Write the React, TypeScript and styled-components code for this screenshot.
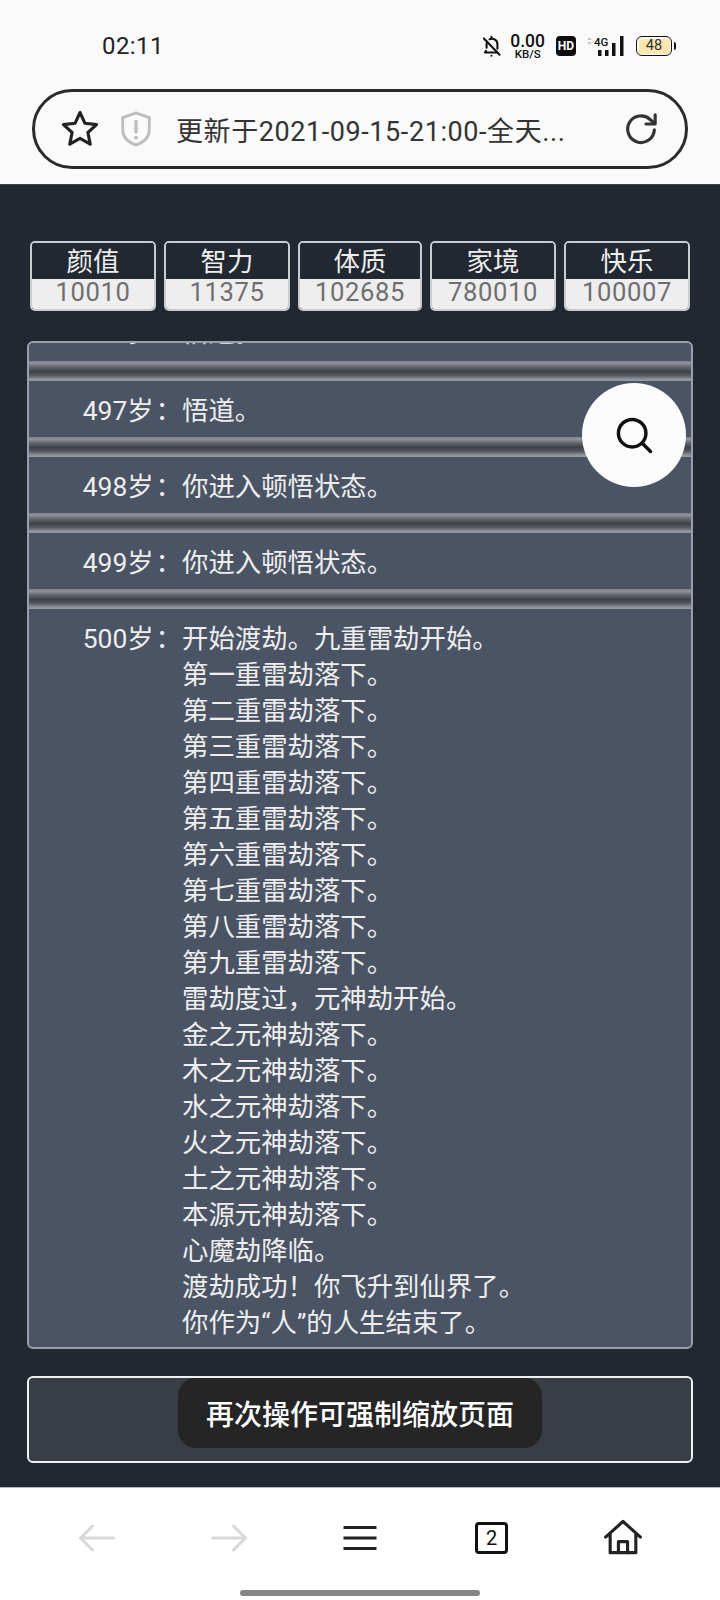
import { FC, ReactNode } from "react";
import styled, { createGlobalStyle } from "styled-components";

const GlobalStyle = createGlobalStyle`
  html, body {
    margin: 0;
    padding: 0;
    background: #222831;
  }
  * {
    box-sizing: border-box;
  }
`;

const FONT = `Roboto, "Noto Sans CJK SC", sans-serif`;

const Screen = styled.div`
  width: 720px;
  height: 1600px;
  display: flex;
  flex-direction: column;
  overflow: hidden;
  font-family: ${FONT};
  background: #222831;
`;

const TopChrome = styled.header`
  height: 185px;
  flex: none;
  background: #fafafa;
  border-bottom: 1px solid #3a4048;
  padding: 0 32px;
`;

const StatusBar = styled.div`
  height: 89px;
  display: flex;
  align-items: center;
  justify-content: space-between;
  padding: 3px 14px 0 70px;
`;

const Clock = styled.div`
  font-size: 24px;
  color: #222;
  letter-spacing: 0.4px;
`;

const StatusIcons = styled.div`
  display: flex;
  align-items: center;
  color: #111;
`;

const Speed = styled.div`
  display: flex;
  flex-direction: column;
  align-items: center;
  margin: 0 11px 0 5px;
  font-weight: 500;
  .num {
    font-size: 17.5px;
    line-height: 16px;
  }
  .unit {
    font-size: 11.5px;
    line-height: 11px;
  }
`;

const HdBadge = styled.div`
  width: 20px;
  height: 20px;
  border-radius: 4px;
  background: #0c0c0c;
  color: #fff;
  font-size: 12px;
  font-weight: 700;
  display: flex;
  align-items: center;
  justify-content: center;
`;

const Signal = styled.div`
  position: relative;
  width: 38px;
  height: 22px;
  margin: 0 12px 0 10px;
  svg {
    display: block;
  }
  span {
    position: absolute;
    left: 8px;
    top: 1px;
    font-size: 11.5px;
    line-height: 12px;
    font-weight: 500;
  }
`;

const Battery = styled.div`
  position: relative;
  width: 36px;
  height: 20px;
  border: 1.5px solid #111;
  border-radius: 6px;
  padding: 1.5px;
  margin-right: 2px;
  &::after {
    content: "";
    position: absolute;
    right: -5px;
    top: 4.5px;
    width: 2.5px;
    height: 8px;
    border-radius: 0 2px 2px 0;
    background: #111;
  }
  div {
    width: 100%;
    height: 100%;
    background: #fbe6ad;
    border-radius: 3px;
    font-size: 14.5px;
    line-height: 14px;
    text-align: center;
    color: #333;
  }
`;

const AddressBar = styled.div`
  height: 80px;
  border: 3px solid #2b2b2b;
  border-radius: 40px;
  display: flex;
  align-items: center;
  padding: 0 24px 0 23px;
`;

const ShieldMark = styled.svg`
  flex: none;
  margin-left: 16px;
`;

const AddressText = styled.div`
  flex: 1;
  margin-left: 22px;
  font-size: 27px;
  letter-spacing: 0.58px;
  color: #333;
  white-space: nowrap;
`;

const Main = styled.main`
  flex: 1;
  display: flex;
  flex-direction: column;
  padding: 56px 27px 0;
  min-height: 0;
`;

const Stats = styled.div`
  display: grid;
  grid-template-columns: 126px 126px 124px 126px 126px;
  gap: 8px;
  padding: 0 3px;
`;

const StatCard = styled.div`
  height: 70px;
  border: 2px solid #c9cbcf;
  border-radius: 5px;
  overflow: hidden;
  display: flex;
  flex-direction: column;
  text-align: center;
  .label {
    height: 36px;
    flex: none;
    background: #222831;
    color: #eeeeee;
    font-size: 26.4px;
    line-height: 38px;
  }
  .value {
    flex: 1;
    background: #eeeeee;
    color: #6e6e6e;
    font-size: 25.6px;
    line-height: 27px;
    letter-spacing: 0.6px;
  }
`;

const LogPanel = styled.section`
  position: relative;
  height: 1008px;
  flex: none;
  margin-top: 30px;
  background: #4a5464;
  border: 2px solid #9a9fa7;
  border-radius: 6px;
  overflow: hidden;
`;

const LogScroll = styled.div`
  margin-top: -38px;
`;

const Row = styled.div`
  display: flex;
  padding: 12px 0 8px;
  font-size: 26.4px;
  line-height: 36px;
  color: #eeeeee;
  &:first-child {
    padding: 10px 0;
  }
  & + & {
    margin-top: 20px;
    position: relative;
  }
  & + &::before {
    content: "";
    position: absolute;
    left: 0;
    right: 0;
    top: -20px;
    height: 20px;
    background: linear-gradient(
      to bottom,
      #7e828a 0,
      #8e9198 12%,
      #62656c 30%,
      #3e4148 52%,
      #55585f 72%,
      #8e9198 90%,
      #9a9da3 100%
    );
  }
`;

const Age = styled.div`
  width: 153px;
  flex: none;
  text-align: right;
  white-space: nowrap;
`;

const AgeColon = styled.span`
  margin-left: 2px;
`;

const SearchFab = styled.button`
  position: absolute;
  top: 40px;
  right: 5px;
  width: 104px;
  height: 104px;
  padding: 0;
  border: none;
  border-radius: 50%;
  background: #fbfcfb;
  display: flex;
  align-items: center;
  justify-content: center;
`;

const Actions = styled.div`
  position: relative;
  height: 87px;
  flex: none;
  margin-top: 27px;
  border: 2px solid #eef0f2;
  border-radius: 6px;
  background: #393e46;
`;

const Toast = styled.div`
  position: absolute;
  left: 149px;
  top: 0;
  width: 364px;
  height: 70px;
  border-radius: 18px;
  background: #252525;
  color: #ffffff;
  font-size: 28px;
  font-weight: 500;
  display: flex;
  align-items: center;
  justify-content: center;
`;

const BottomNav = styled.nav`
  height: 100px;
  flex: none;
  background: #ffffff;
  border-top: 1px solid #b6b9bd;
  padding: 0 75px;
  display: flex;
  align-items: center;
  justify-content: space-between;
`;

const NavSlot = styled.div`
  width: 44px;
  height: 44px;
  display: flex;
  align-items: center;
  justify-content: center;
`;

const TabCount = styled.div`
  width: 33px;
  height: 32px;
  flex: none;
  border: 3px solid #111;
  border-radius: 4px;
  font-size: 20px;
  line-height: 26px;
  text-align: center;
  color: #111;
`;

const GestureBar = styled.div`
  flex: none;
  height: 13px;
  background: #ffffff;
  display: flex;
  justify-content: center;
  padding-top: 3px;
  i {
    display: block;
    width: 240px;
    height: 6px;
    border-radius: 3px;
    background: #858585;
  }
`;

const Icon: FC<{ size: number; color?: string; width?: number; children: ReactNode }> = ({
  size,
  color = "#222",
  width = 2.5,
  children,
}) => (
  <svg
    width={size}
    height={size}
    viewBox="0 0 24 24"
    fill="none"
    stroke={color}
    strokeWidth={width}
    strokeLinecap="round"
    strokeLinejoin="round"
  >
    {children}
  </svg>
);

const STATS = [
  { label: "颜值", value: "10010" },
  { label: "智力", value: "11375" },
  { label: "体质", value: "102685" },
  { label: "家境", value: "780010" },
  { label: "快乐", value: "100007" },
];

const ROWS = [
  { age: "496岁", lines: ["悟道。"] },
  { age: "497岁", lines: ["悟道。"] },
  { age: "498岁", lines: ["你进入顿悟状态。"] },
  { age: "499岁", lines: ["你进入顿悟状态。"] },
  {
    age: "500岁",
    lines: [
      "开始渡劫。九重雷劫开始。",
      "第一重雷劫落下。",
      "第二重雷劫落下。",
      "第三重雷劫落下。",
      "第四重雷劫落下。",
      "第五重雷劫落下。",
      "第六重雷劫落下。",
      "第七重雷劫落下。",
      "第八重雷劫落下。",
      "第九重雷劫落下。",
      "雷劫度过，元神劫开始。",
      "金之元神劫落下。",
      "木之元神劫落下。",
      "水之元神劫落下。",
      "火之元神劫落下。",
      "土之元神劫落下。",
      "本源元神劫落下。",
      "心魔劫降临。",
      "渡劫成功！你飞升到仙界了。",
      "你作为“人”的人生结束了。",
    ],
  },
];

const App: FC = () => (
  <Screen>
    <GlobalStyle />
    <TopChrome>
      <StatusBar>
        <Clock>02:11</Clock>
        <StatusIcons>
          <Icon size={26} color="#111" width={1.9}>
            <path d="M6.500 16.500L5.500 18h11M7 13.500V10.500c0-.9.2-1.700.6-2.400M9.800 5.800a5 5 0 0 1 7.200 4.700v4" />
            <path d="M4.500 5l14.500 15" />
            <path d="M11.500 3.500v1M11.500 21h.01" />
          </Icon>
          <Speed>
            <span className="num">0.00</span>
            <span className="unit">KB/S</span>
          </Speed>
          <HdBadge>HD</HdBadge>
          <Signal>
            <span>4G</span>
            <svg width="38" height="22" viewBox="0 0 38 22" fill="#111">
              <path d="M1 5l2.500-3 2.500 3zM1 7l2.500 3 2.500-3z" fill="#c8c8c8" />
              <rect x="12" y="15" width="3.500" height="6" />
              <rect x="19" y="15" width="3.500" height="6" />
              <rect x="26" y="8" width="3.500" height="13" />
              <rect x="34" y="1" width="3.500" height="20" />
            </svg>
          </Signal>
          <Battery>
            <div>48</div>
          </Battery>
        </StatusIcons>
      </StatusBar>
      <AddressBar>
        <Icon size={44} color="#222" width={1.7}>
          <path d="M12 3l2.700 5.900 6.300.7-4.700 4.300 1.300 6.400L12 17.100l-5.600 3.200 1.300-6.400L3 9.600l6.300-.7z" />
        </Icon>
        <ShieldMark width="36" height="38" viewBox="0 0 36 40" fill="none" stroke="#bdbdbd" strokeWidth="3" strokeLinejoin="round">
          <path d="M18 3l14 5v13c0 8-6 13-14 16C10 34 4 29 4 21V8z" />
          <path d="M18 12v11" strokeLinecap="round" strokeWidth="3.500" />
          <circle cx="18" cy="29" r="2" fill="#bdbdbd" stroke="none" />
        </ShieldMark>
        <AddressText>更新于2021-09-15-21:00-全天...</AddressText>
        <Icon size={40} color="#333" width={1.9}>
          <path d="M20 12.500A8 8 0 1 1 17.500 6.300L20 8.500" />
          <path d="M20.500 3.500v5.500h-5.500" />
        </Icon>
      </AddressBar>
    </TopChrome>
    <Main>
      <Stats>
        {STATS.map((s) => (
          <StatCard key={s.label}>
            <div className="label">{s.label}</div>
            <div className="value">{s.value}</div>
          </StatCard>
        ))}
      </Stats>
      <LogPanel>
        <LogScroll>
          {ROWS.map((r) => (
            <Row key={r.age}>
              <Age>
                {r.age}
                <AgeColon>：</AgeColon>
              </Age>
              <div>
                {r.lines.map((l) => (
                  <div key={l}>{l}</div>
                ))}
              </div>
            </Row>
          ))}
        </LogScroll>
        <SearchFab>
          <Icon size={44} color="#111" width={1.9}>
            <circle cx="11" cy="11" r="7.500" />
            <path d="M16.500 16.500L21 21" />
          </Icon>
        </SearchFab>
      </LogPanel>
      <Actions>
        <Toast>再次操作可强制缩放页面</Toast>
      </Actions>
    </Main>
    <BottomNav>
      <NavSlot>
        <Icon size={44} color="#d9d9d9" width={1.7}>
          <path d="M21 12H3M9.500 5.500L3 12l6.500 6.500" />
        </Icon>
      </NavSlot>
      <NavSlot>
        <Icon size={44} color="#d9d9d9" width={1.7}>
          <path d="M3 12h18M14.500 5.500L21 12l-6.500 6.500" />
        </Icon>
      </NavSlot>
      <NavSlot>
        <Icon size={44} color="#222" width={1.7}>
          <path d="M3 6.300h18M3 12h18M3 17.700h18" strokeLinecap="butt" />
        </Icon>
      </NavSlot>
      <NavSlot>
        <TabCount>2</TabCount>
      </NavSlot>
      <NavSlot>
        <Icon size={44} color="#222" width={1.7}>
          <path d="M2.500 11.500L12 3l9.500 8.500M5 9.500V20h14V9.500" />
          <path d="M9.500 20v-6h5v6" />
        </Icon>
      </NavSlot>
    </BottomNav>
    <GestureBar>
      <i />
    </GestureBar>
  </Screen>
);

export default App;
